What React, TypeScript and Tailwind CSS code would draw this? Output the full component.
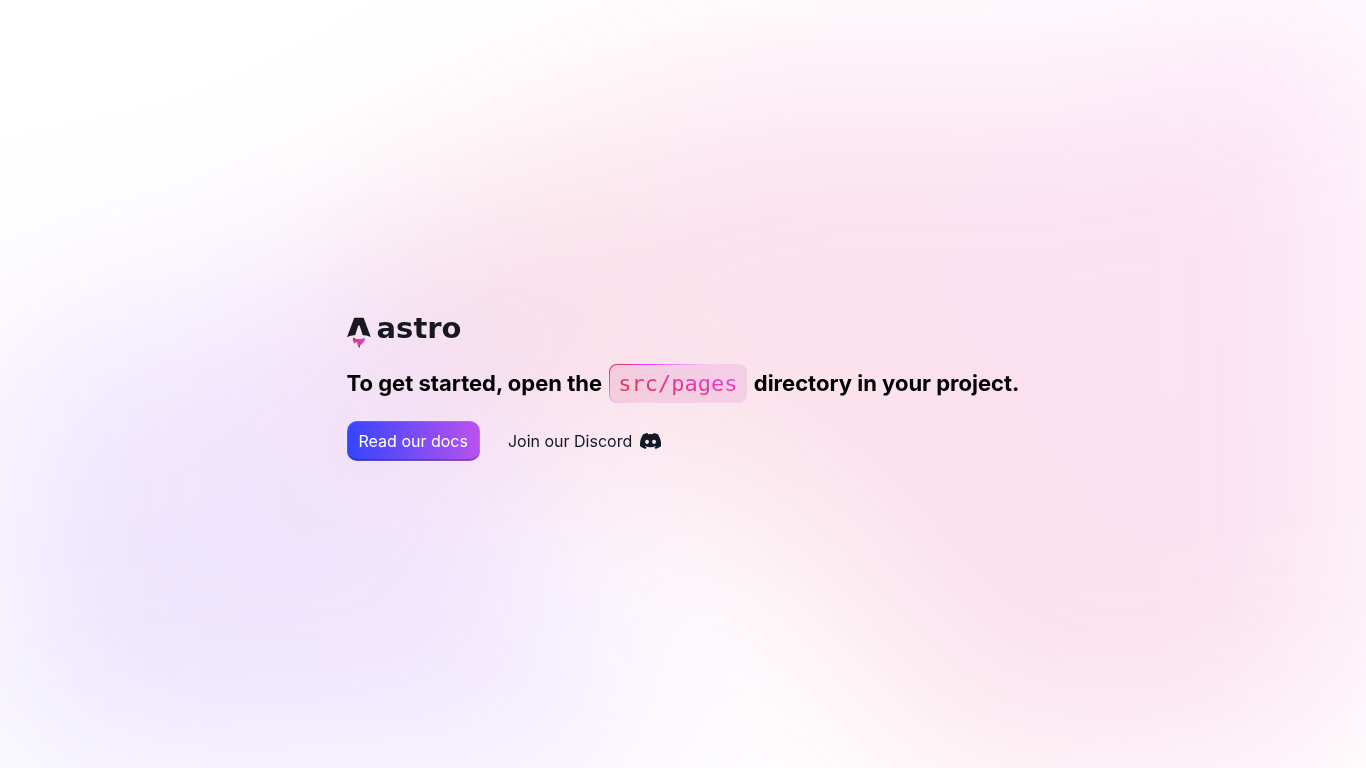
function Background() {
  return (
    <div className="fixed inset-0 -z-10 overflow-hidden blur-[100px]" aria-hidden="true">
      <svg className="size-full" viewBox="0 0 1440 1024" preserveAspectRatio="none" fill="none">
        <path
          fill="url(#violet)"
          fillRule="evenodd"
          opacity=".154"
          d="M-217.58 475.75c91.82-72.02 225.52-29.38 341.2-44.74C240 415.56 372.33 315.14 466.77 384.9c102.9 76.02 44.74 246.76 90.31 366.31 29.83 78.24 90.48 136.14 129.48 210.23 57.92 109.99 169.67 208.23 155.9 331.77-13.52 121.26-103.42 264.33-224.23 281.37-141.96 20.03-232.72-220.96-374.06-196.99-151.7 25.73-172.68 330.24-325.85 315.72-128.6-12.2-110.9-230.73-128.15-358.76-12.16-90.14 65.87-176.25 44.1-264.57-26.42-107.2-167.12-163.46-176.72-273.45-10.15-116.29 33.01-248.75 124.87-320.79Z"
        />
        <path
          fill="url(#rose)"
          fillRule="evenodd"
          opacity=".154"
          d="M1103.43 115.43c146.42-19.45 275.33-155.84 413.5-103.59 188.09 71.13 409 212.64 407.06 413.88-1.94 201.25-259.28 278.6-414.96 405.96-130 106.35-240.24 294.39-405.6 265.3-163.7-28.8-161.93-274.12-284.34-386.66-134.95-124.06-436-101.46-445.82-284.6-9.68-180.38 247.41-246.3 413.54-316.9 101.01-42.93 207.83 21.06 316.62 6.61Z"
        />
        <defs>
          <linearGradient id="rose" x1="373" x2="1995.44" y1="1100" y2="118.03" gradientUnits="userSpaceOnUse">
            <stop stopColor="#D83333" />
            <stop offset="1" stopColor="#F041FF" />
          </linearGradient>
          <linearGradient id="violet" x1="107.37" x2="1130.66" y1="1993.35" y2="1026.31" gradientUnits="userSpaceOnUse">
            <stop stopColor="#3245FF" />
            <stop offset="1" stopColor="#BC52EE" />
          </linearGradient>
        </defs>
      </svg>
    </div>
  );
}

const flame =
  "M7.77 36.35C6.4 35.11 6 32.51 6.57 30.62c.99 1.2 2.35 1.57 3.75 1.78 2.18.33 4.31.2 6.33-.78.23-.12.44-.27.7-.42.18.55.23 1.1.17 1.67a4.56 4.56 0 0 1-1.94 3.23c-.43.32-.9.61-1.34.91-1.38.94-1.76 2.03-1.24 3.62l.05.17a3.63 3.63 0 0 1-1.6-1.38 3.87 3.87 0 0 1-.63-2.1c0-.37 0-.74-.05-1.1-.13-.9-.55-1.3-1.33-1.32a1.56 1.56 0 0 0-1.63 1.26c0 .06-.03.12-.05.2Z";

function Logo() {
  return (
    <div className="flex h-12 items-center gap-1.5">
      <svg className="h-12 w-6" viewBox="0 0 24 48" fill="none" aria-hidden="true">
        <path fill="#17191E" d={flame} />
        <path fill="url(#flame)" d={flame} />
        <path
          fill="#17191E"
          d="M.02 30.31s4.02-1.95 8.05-1.95l3.04-9.4c.11-.45.44-.76.82-.76.37 0 .7.31.82.76l3.04 9.4c4.77 0 8.05 1.95 8.05 1.95L17 11.71c-.2-.56-.53-.91-.98-.91H7.83c-.44 0-.76.35-.97.9L.02 30.31Z"
        />
        <defs>
          <linearGradient id="flame" x1="6.33" x2="19.43" y1="40.8" y2="34.6" gradientUnits="userSpaceOnUse">
            <stop stopColor="#D83333" />
            <stop offset="1" stopColor="#F041FF" />
          </linearGradient>
        </defs>
      </svg>
      <span className="pb-1.5 font-['DejaVu_Sans',sans-serif] text-[29px] leading-8 font-bold text-[#17191e]">
        astro
      </span>
    </div>
  );
}

function DiscordIcon() {
  return (
    <svg className="ml-2 h-4" viewBox="0 0 127.14 96.36" fill="currentColor" aria-hidden="true">
      <path d="M107.7,8.07A105.15,105.15,0,0,0,81.47,0a72.06,72.06,0,0,0-3.36,6.83A97.68,97.68,0,0,0,49,6.83,72.37,72.37,0,0,0,45.64,0,105.89,105.89,0,0,0,19.39,8.09C2.79,32.65-1.71,56.6.54,80.21h0A105.73,105.73,0,0,0,32.71,96.36,77.7,77.7,0,0,0,39.6,85.25a68.42,68.42,0,0,1-10.85-5.18c.91-.66,1.8-1.34,2.66-2a75.57,75.57,0,0,0,64.32,0c.87.71,1.76,1.39,2.66,2a68.68,68.68,0,0,1-10.87,5.19,77,77,0,0,0,6.89,11.1A105.25,105.25,0,0,0,126.6,80.22h0C129.24,52.84,122.09,29.11,107.7,8.07ZM42.45,65.69C36.18,65.69,31,60,31,53s5-12.74,11.43-12.74S54,46,53.89,53,48.84,65.69,42.45,65.69Zm42.24,0C78.41,65.69,73.25,60,73.25,53s5-12.74,11.44-12.74S96.23,46,96.12,53,91.08,65.69,84.69,65.69Z" />
    </svg>
  );
}

export default function App() {
  return (
    <div className="min-h-screen font-[Inter,Roboto,'Liberation_Sans',sans-serif]">
      <Background />
      <main className="flex min-h-screen justify-center">
        <section className="flex flex-col items-start justify-center px-4">
          <a href="https://astro.build" aria-label="astro">
            <Logo />
          </a>
          <h1 className="mt-[9px] text-[22px] leading-[39px] font-bold text-black">
            To get started, open the{" "}
            <code className="mx-0.5 inline-block rounded-lg border border-transparent px-2 py-1.5 font-['DejaVu_Sans_Mono',monospace] leading-[25px] font-normal [background:linear-gradient(66.77deg,#f3cddd_0%,#f5cee7_100%)_padding-box,linear-gradient(155deg,#d83333_0%,#f041ff_18%,#f5cee7_45%)_border-box]">
              <span className="block bg-[linear-gradient(14deg,#d83333_0%,#f041ff_100%)] bg-clip-text text-transparent">
                src/pages
              </span>
            </code>{" "}
            directory in your project.
          </h1>
          <div className="mt-[18px] flex gap-4">
            <a
              href="https://docs.astro.build"
              className="flex items-center rounded-[10px] bg-[linear-gradient(83.21deg,#3245ff_0%,#bc52ee_100%)] px-3 py-2.5 leading-5 text-white shadow-[inset_0_0_0_1px_rgba(255,255,255,0.12),inset_0_-2px_0_rgba(0,0,0,0.24)]"
            >
              Read our docs
            </a>
            <a href="https://astro.build/chat" className="flex items-center px-3 py-2.5 leading-5 text-[#111827]">
              Join our Discord
              <DiscordIcon />
            </a>
          </div>
        </section>
      </main>
    </div>
  );
}
